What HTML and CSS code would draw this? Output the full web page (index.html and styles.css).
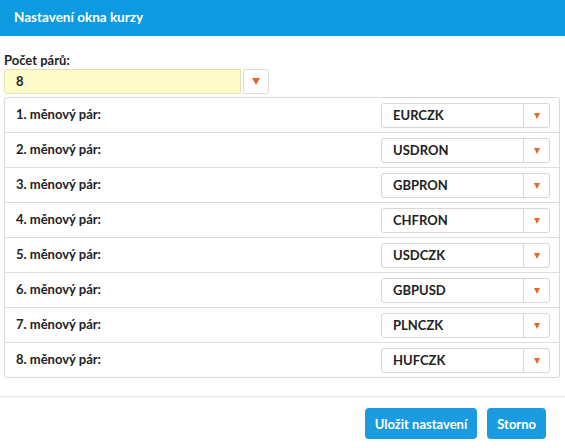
FILE: index.html
```html
<!DOCTYPE html>
<html lang="cs">
<head>
<meta charset="utf-8">
<title>Nastavení okna kurzy</title>
<link rel="stylesheet" href="styles.css">
</head>
<body>
<div class="dialog">
  <div class="header">Nastavení okna kurzy</div>
  <div class="content">
    <div class="count-label">Počet párů:</div>
    <div class="count-field">
      <div class="count-value">8</div>
      <div class="count-btn"><span class="arrow"></span></div>
    </div>
    <div class="panel">
      <div class="row"><span class="row-label">1. měnový pár:</span><div class="select"><span class="select-value">EURCZK</span><span class="select-btn"><span class="arrow small"></span></span></div></div>
      <div class="row"><span class="row-label">2. měnový pár:</span><div class="select"><span class="select-value">USDRON</span><span class="select-btn"><span class="arrow small"></span></span></div></div>
      <div class="row"><span class="row-label">3. měnový pár:</span><div class="select"><span class="select-value">GBPRON</span><span class="select-btn"><span class="arrow small"></span></span></div></div>
      <div class="row"><span class="row-label">4. měnový pár:</span><div class="select"><span class="select-value">CHFRON</span><span class="select-btn"><span class="arrow small"></span></span></div></div>
      <div class="row"><span class="row-label">5. měnový pár:</span><div class="select"><span class="select-value">USDCZK</span><span class="select-btn"><span class="arrow small"></span></span></div></div>
      <div class="row"><span class="row-label">6. měnový pár:</span><div class="select"><span class="select-value">GBPUSD</span><span class="select-btn"><span class="arrow small"></span></span></div></div>
      <div class="row"><span class="row-label">7. měnový pár:</span><div class="select"><span class="select-value">PLNCZK</span><span class="select-btn"><span class="arrow small"></span></span></div></div>
      <div class="row"><span class="row-label">8. měnový pár:</span><div class="select"><span class="select-value">HUFCZK</span><span class="select-btn"><span class="arrow small"></span></span></div></div>
    </div>
  </div>
  <div class="footer">
    <button class="btn">Uložit nastavení</button>
    <button class="btn">Storno</button>
  </div>
</div>
</body>
</html>
```
FILE: styles.css
```css
html, body {
  margin: 0;
  padding: 0;
  background: #ffffff;
}
body {
  font-family: "Lato", "Open Sans", sans-serif;
  font-size: 13px;
  color: #222222;
  width: 565px;
  height: 448px;
  overflow: hidden;
}
.dialog {
  display: flex;
  flex-direction: column;
}
.header {
  height: 36px;
  background: #0e9ae0;
  color: #ffffff;
  font-size: 13.5px;
  font-weight: 700;
  padding-left: 14px;
  line-height: 34px;
  box-sizing: border-box;
}
.content {
  padding: 16px 5px 0 4px;
}
.count-label {
  font-weight: 700;
  font-size: 13px;
  line-height: 16px;
  height: 17px;
  color: #222;
}
.count-field {
  display: flex;
  height: 25px;
  width: 265px;
  margin-bottom: 3px;
}
.count-value {
  flex: 0 0 237px;
  background: #fefdc9;
  border: 1px solid #e4e2b4;
  border-radius: 3px 0 0 3px;
  box-sizing: border-box;
  padding-left: 11px;
  font-weight: 700;
  line-height: 23px;
}
.count-btn {
  flex: 0 0 26px;
  margin-left: 2px;
  border: 1px solid #dcdcdc;
  border-radius: 0 3px 3px 0;
  box-sizing: border-box;
  display: flex;
  align-items: center;
  justify-content: center;
  background: #fff;
}
.arrow {
  width: 0;
  height: 0;
  border-left: 4px solid transparent;
  border-right: 4px solid transparent;
  border-top: 7px solid #e8662a;
}
.arrow.small {
  border-left-width: 3.5px;
  border-right-width: 3.5px;
  border-top-width: 6px;
}
.panel {
  border: 1px solid #dadada;
  border-radius: 3px;
  width: 556px;
  box-sizing: border-box;
}
.row {
  height: 35px;
  display: flex;
  align-items: flex-start;
  justify-content: space-between;
  border-top: 1px solid #dddddd;
  box-sizing: border-box;
  padding: 5px 9px 0 11px;
}
.row:first-child {
  border-top: none;
  height: 34px;
}
.row-label {
  font-weight: 700;
  line-height: 20px;
  margin-top: 1px;
}
.select {
  display: flex;
  width: 169px;
  height: 25px;
  border: 1px solid #d6d6d6;
  border-radius: 3px;
  box-sizing: border-box;
}
.select-value {
  flex: 1;
  padding-left: 11px;
  font-weight: 700;
  line-height: 23px;
  font-size: 13px;
}
.select-btn {
  flex: 0 0 25px;
  border-left: 1px solid #d6d6d6;
  display: flex;
  align-items: center;
  justify-content: center;
}
.footer {
  margin-top: 18px;
  border-top: 1px solid #e6e6e6;
  padding: 11px 19px 0 0;
  display: flex;
  justify-content: flex-end;
  gap: 10px;
}
.btn {
  font-family: "Lato", "Open Sans", sans-serif;
  font-weight: 700;
  font-size: 13px;
  color: #ffffff;
  background: #1b9be0;
  border: none;
  border-radius: 4px;
  height: 31px;
  padding: 0 10px;
}
```
